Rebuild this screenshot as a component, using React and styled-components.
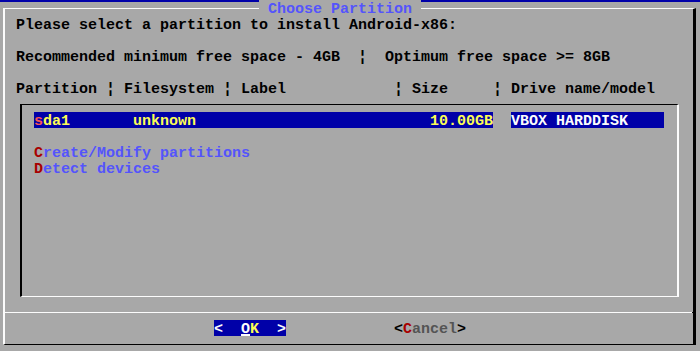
import React from 'react';
import styled, { createGlobalStyle } from 'styled-components';

// VGA text-mode palette (6-bit DAC values)
const vga = {
  gray: '#a8a8a8',
  blue: '#0000a8',
  white: '#fcfcfc',
  black: '#000000',
  lightBlue: '#5454fc',
  yellow: '#fcfc54',
  lightRed: '#fc5454',
  red: '#a80000',
  darkGray: '#545454',
};

const CELL = 9;
const ROW = 16;

// rows are 16px tall; the taller line box pushes glyphs down to where the
// console font puts them
const GlobalStyle = createGlobalStyle`
  html, body {
    margin: 0;
    background: ${vga.gray};
  }

  body {
    font-family: "Liberation Mono", "DejaVu Sans Mono", monospace;
    font-weight: bold;
    font-size: 15px;
    line-height: 20px;
    color: ${vga.black};
  }
`;

const Screen = styled.div`
  width: 700px;
  height: 351px;
  overflow: hidden;
  background: ${vga.gray};
`;

const BackTitle = styled.div`
  height: 2px;
  background: ${vga.blue};
`;

const Dialog = styled.div`
  position: relative;
  box-sizing: border-box;
  width: 693px;
  margin: 6px 0 0 3px;
  border-style: solid;
  border-width: 1px 3px 1px 2px;
  border-color: ${vga.white} ${vga.black} ${vga.black} ${vga.white};
`;

// sits on top of the frame's top line
const Title = styled.div`
  position: absolute;
  top: -9px;
  left: 254px;
  height: ${ROW}px;
  padding: 0 ${CELL}px;
  background: ${vga.gray};
  color: ${vga.lightBlue};
  white-space: pre;
`;

const Body = styled.div`
  padding: 7px 0 0 11px;
`;

const Line = styled.div`
  height: ${ROW}px;
  margin-top: ${(p) => (p.$skip || 0) * ROW}px;
  white-space: pre;
`;

const ListBox = styled.div`
  box-sizing: border-box;
  width: 659px;
  height: 193px;
  margin: 8px 0 0 4px;
  padding: 7px 0 0 12px;
  border-style: solid;
  border-width: 1px 2px 1px 2px;
  border-color: ${vga.black} ${vga.white} ${vga.white} ${vga.black};
`;

const Item = styled.div`
  display: flex;
  height: ${ROW}px;
  margin-top: ${(p) => (p.$skip || 0) * ROW}px;
  white-space: pre;
  color: ${vga.lightBlue};
`;

const Bar = styled.span`
  display: flex;
  width: ${(p) => p.$cols * CELL}px;
  margin-right: ${(p) => (p.$gap || 0) * CELL}px;
  background: ${vga.blue};
  color: ${(p) => p.$color};
`;

const Field = styled.span`
  width: ${(p) => p.$cols * CELL}px;
  text-align: ${(p) => p.$align || 'left'};
`;

const Hot = styled.span`
  color: ${(p) => p.$color};
`;

const Divider = styled.div`
  height: 1px;
  margin-top: 15px;
  background: linear-gradient(to right, ${vga.white} calc(100% - 1px), ${vga.black} 0);
`;

const Footer = styled.div`
  display: flex;
  gap: ${12 * CELL}px;
  padding: 7px 0 8px 209px;
`;

const Button = styled.span`
  display: flex;
  height: ${ROW}px;
  white-space: pre;
  background: ${(p) => (p.$active ? vga.blue : 'transparent')};
  color: ${(p) => (p.$active ? vga.yellow : vga.darkGray)};
`;

const Bracket = styled.span`
  color: ${(p) => (p.$active ? vga.white : vga.black)};
`;

const Hotkey = styled.span`
  color: ${(p) => (p.$active ? vga.white : vga.red)};
  text-decoration: ${(p) => (p.$active ? 'underline' : 'none')};
  text-decoration-thickness: 2px;
  text-underline-offset: 1px;
`;

const menu = [
  { key: 'C', rest: 'reate/Modify partitions', skip: 1 },
  { key: 'D', rest: 'etect devices', skip: 0 },
];

const DialogButton = ({ label, active }) => (
  <Button $active={active}>
    <Bracket $active={active}>{active ? '<  ' : '<'}</Bracket>
    <Hotkey $active={active}>{label[0]}</Hotkey>
    {label.slice(1)}
    <Bracket $active={active}>{active ? '  >' : '>'}</Bracket>
  </Button>
);

export default function App() {
  return (
    <>
      <GlobalStyle />
      <Screen>
        <BackTitle />
        <Dialog>
          <Title>Choose Partition</Title>
          <Body>
            <Line>Please select a partition to install Android-x86:</Line>
            <Line $skip={1}>Recommended minimum free space - 4GB  ¦  Optimum free space &gt;= 8GB</Line>
            <Line $skip={1}>Partition ¦ Filesystem ¦ Label            ¦ Size     ¦ Drive name/model</Line>
            <ListBox>
              <Item>
                <Bar $cols={51} $gap={2} $color={vga.yellow}>
                  <Field $cols={11}>
                    <Hot $color={vga.lightRed}>s</Hot>da1
                  </Field>
                  <Field $cols={33}>unknown</Field>
                  <Field $cols={7} $align="right">10.00GB</Field>
                </Bar>
                <Bar $cols={17} $color={vga.white}>VBOX HARDDISK</Bar>
              </Item>
              {menu.map((m) => (
                <Item key={m.key} $skip={m.skip}>
                  <Hot $color={vga.red}>{m.key}</Hot>
                  {m.rest}
                </Item>
              ))}
            </ListBox>
          </Body>
          <Divider />
          <Footer>
            <DialogButton label="OK" active />
            <DialogButton label="Cancel" />
          </Footer>
        </Dialog>
      </Screen>
    </>
  );
}
